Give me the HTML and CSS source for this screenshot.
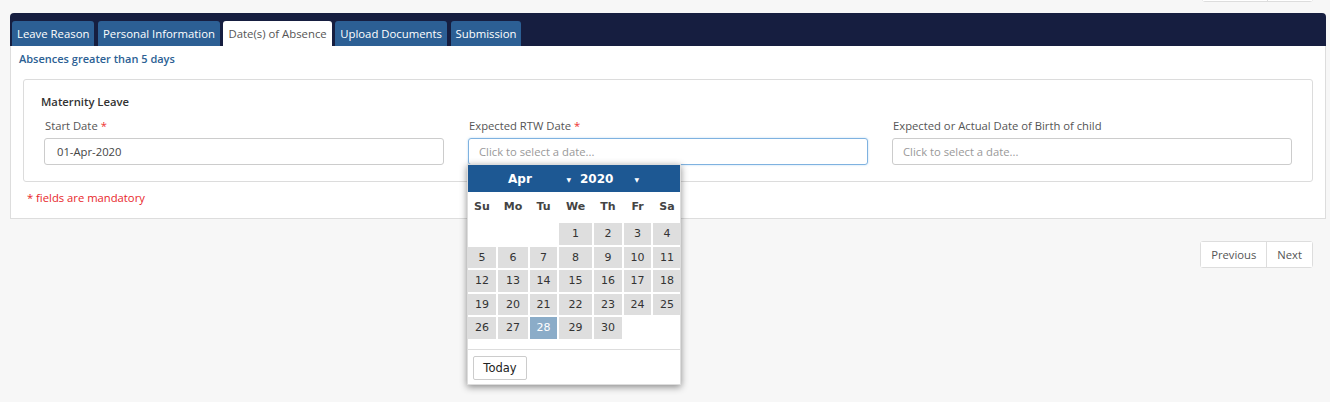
FILE: index.html
```html
<!DOCTYPE html>
<html lang="en">
<head>
<meta charset="utf-8">
<title>Date(s) of Absence</title>
<link rel="stylesheet" href="styles.css">
</head>
<body>
<div class="pager pager-top">
  <div class="btn-group"><span class="btn btn-prev"></span><span class="btn btn-next"></span></div>
</div>
<div class="wizard">
  <div class="tabs-bar">
    <span class="tab">Leave Reason</span>
    <span class="tab">Personal Information</span>
    <span class="tab active">Date(s) of Absence</span>
    <span class="tab">Upload Documents</span>
    <span class="tab">Submission</span>
  </div>
  <div class="panel">
    <div class="section-title">Absences greater than 5 days</div>
    <div class="fieldset">
      <div class="legend">Maternity Leave</div>
      <div class="fields">
        <div class="field">
          <label class="label">Start Date <span class="req">*</span></label>
          <div class="input">01-Apr-2020</div>
        </div>
        <div class="field picker-host">
          <label class="label">Expected RTW Date <span class="req">*</span></label>
          <div class="input focus placeholder">Click to select a date...</div>
          <div class="datepicker">
            <div class="dp-header">
              <span class="dp-sel dp-month">Apr<span class="caret">▼</span></span>
              <span class="dp-sel dp-year">2020<span class="caret">▼</span></span>
            </div>
            <div class="dp-grid">
              <span class="dh">Su</span><span class="dh">Mo</span><span class="dh">Tu</span><span class="dh">We</span><span class="dh">Th</span><span class="dh">Fr</span><span class="dh">Sa</span>
              <span></span><span></span><span></span><span class="d">1</span><span class="d">2</span><span class="d">3</span><span class="d">4</span>
              <span class="d">5</span><span class="d">6</span><span class="d">7</span><span class="d">8</span><span class="d">9</span><span class="d">10</span><span class="d">11</span>
              <span class="d">12</span><span class="d">13</span><span class="d">14</span><span class="d">15</span><span class="d">16</span><span class="d">17</span><span class="d">18</span>
              <span class="d">19</span><span class="d">20</span><span class="d">21</span><span class="d">22</span><span class="d">23</span><span class="d">24</span><span class="d">25</span>
              <span class="d">26</span><span class="d">27</span><span class="d sel">28</span><span class="d">29</span><span class="d">30</span><span></span><span></span>
            </div>
            <div class="dp-footer"><button class="dp-today">Today</button></div>
          </div>
        </div>
        <div class="field">
          <label class="label">Expected or Actual Date of Birth of child</label>
          <div class="input placeholder">Click to select a date...</div>
        </div>
      </div>
    </div>
    <div class="mandatory">* fields are mandatory</div>
  </div>
</div>
<div class="pager pager-bottom">
  <div class="btn-group"><button class="btn">Previous</button><button class="btn">Next</button></div>
</div>
</body>
</html>
```
FILE: styles.css
```css
* { box-sizing: border-box; }
html, body { margin: 0; padding: 0; }
body {
  background: #f7f7f7;
  font-family: "Open Sans", "Liberation Sans", sans-serif;
  font-size: 11.25px;
  color: #333;
  overflow: hidden;
  height: 402px;
}

.pager { display: flex; justify-content: flex-end; padding-right: 17px; }
.pager-top { margin-top: -25px; height: 27px; }
.pager-bottom { margin-top: 22px; }
.btn-group { display: flex; background: #fff; border: 1px solid #ddd; border-radius: 3px; height: 27px; }
.btn {
  font-family: "Open Sans", "Liberation Sans", sans-serif;
  font-size: 11.25px;
  color: #555;
  background: #fff;
  border: 0;
  padding: 0 10px;
  height: 25px;
  cursor: pointer;
  display: block;
}
.btn + .btn { border-left: 1px solid #ddd; }
.btn-prev { width: 64px; }
.btn-next { width: 45px; }

.wizard { margin: 11px 4px 0 10px; }
.tabs-bar {
  background: #161e40;
  border-radius: 4px 4px 0 0;
  height: 33px;
  padding: 8px 2px 0 2px;
  display: flex;
  gap: 3.5px;
  align-items: flex-end;
}
.tab {
  background: #2c5f94;
  color: #fff;
  height: 25px;
  line-height: 25px;
  padding: 0 5px;
  font-size: 11.35px;
  border-radius: 3px 3px 0 0;
  white-space: nowrap;
}
.tab.active { background: #fff; color: #555; }

.panel {
  background: #fff;
  border: 1px solid #ddd;
  border-top: 0;
  height: 173px;
  padding: 4px 12px 0 12px;
}
.section-title {
  color: #2c5f94;
  font-weight: 600;
  font-size: 11px;
  margin-left: -4px;
  height: 18px;
  line-height: 18px;
}
.fieldset {
  margin-top: 11px;
  border: 1px solid #dcdcdc;
  border-radius: 3px;
  padding: 13px 20px 16px 20px;
}
.legend { font-weight: 600; color: #333; margin-left: -3px; line-height: 18px; }
.fields { display: grid; grid-template-columns: repeat(3, 1fr); column-gap: 24px; margin-top: 7px; }
.field { position: relative; }
.label { display: block; color: #555; margin-left: 1px; line-height: 16px; height: 16px; }
.req { color: #e33; }
.input {
  margin-top: 4px;
  height: 27px;
  border: 1px solid #ccc;
  border-radius: 3px;
  padding: 0 12px;
  line-height: 25px;
  color: #444;
}
.input.placeholder { color: #999; padding-left: 10px; }
.input.focus { border-color: #7fb2e0; box-shadow: 0 0 2px rgba(102,175,233,.5); }

.mandatory { color: #e8262a; margin-top: 7px; margin-left: 4px; line-height: 18px; }

/* datepicker (overlay) */
.datepicker {
  position: absolute;
  left: -1px;
  top: 46px;
  width: 214px;
  background: #fff;
  border: 1px solid #ddd;
  box-shadow: 0 2px 7px rgba(0,0,0,.45);
  font-family: "DejaVu Sans", Verdana, sans-serif;
  font-size: 11px;
  z-index: 5;
}
.dp-header {
  background: #1d5893;
  height: 27px;
  display: flex;
  justify-content: center;
  align-items: center;
  color: #fff;
  font-weight: bold;
  font-size: 12px;
}
.dp-sel { position: relative; display: flex; align-items: center; }
.dp-month { width: 72px; padding-left: 5px; }
.dp-year { width: 70px; padding-left: 5px; }
.caret { font-size: 6px; position: absolute; right: 6px; top: 50%; transform: translateY(-50%); }
.dp-month .caret { right: 4px; }
.dp-year .caret { right: 6px; }

.dp-grid {
  display: grid;
  grid-template-columns: 28px 30px 27px 33px 28px 27px 28px;
  grid-template-rows: 29px repeat(5, 21.5px);
  column-gap: 2px;
  row-gap: 2px;
}
.dh { text-align: center; font-weight: bold; color: #444; line-height: 29px; }
.d {
  background: #dedede;
  color: #333;
  text-align: center;
  line-height: 21.5px;
}
.d.sel { background: #8bacc8; color: #fff; }

.dp-footer {
  margin-top: 10px;
  border-top: 1px solid #ddd;
  padding: 6px 5px 4px 5px;
}
.dp-today {
  font-family: "DejaVu Sans", Verdana, sans-serif;
  font-size: 11.5px;
  color: #222;
  background: #fff;
  border: 1px solid #ccc;
  border-radius: 2px;
  height: 24px;
  width: 54px;
  padding: 0;
}
```
